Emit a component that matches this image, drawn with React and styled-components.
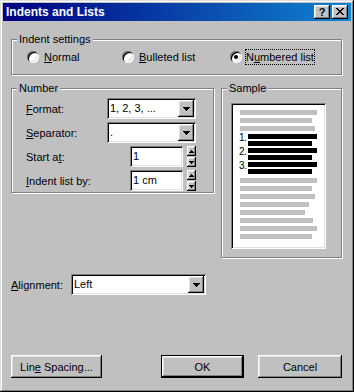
import React from 'react';
import styled, { createGlobalStyle, css } from 'styled-components';

const Global = createGlobalStyle`
  html, body { margin: 0; padding: 0; background: #c0c0c0; }
  body { font-family: "Liberation Sans", Arial, sans-serif; font-size: 11px; color: #000; }
  * { box-sizing: border-box; }
`;

const raised = css`
  box-shadow: inset -1px -1px 0 #000, inset 1px 1px 0 #fff, inset -2px -2px 0 #808080, inset 2px 2px 0 #dfdfdf;
`;
const sunken = css`
  box-shadow: inset 1px 1px 0 #808080, inset -1px -1px 0 #fff, inset 2px 2px 0 #000, inset -2px -2px 0 #dfdfdf;
`;

const Window = styled.div`
  width: 354px;
  height: 392px;
  background: #c0c0c0;
  padding: 3px;
  box-shadow: inset -1px -1px 0 #000, inset 1px 1px 0 #dfdfdf, inset -2px -2px 0 #808080, inset 2px 2px 0 #fff;
  display: flex;
  flex-direction: column;
`;

const TitleBar = styled.div`
  height: 18px;
  background: linear-gradient(to right, #000080, #1084d0);
  display: flex;
  align-items: center;
  padding: 0 3px 0 3px;
  color: #fff;
  font-weight: bold;
  font-size: 12px;
`;
const Title = styled.span`
  flex: 1;
  line-height: 18px;
`;
const CaptionButton = styled.div`
  width: 16px;
  height: 14px;
  background: #c0c0c0;
  ${raised};
  color: #000;
  font: bold 11px "Liberation Sans", Arial, sans-serif;
  display: flex;
  align-items: center;
  justify-content: center;
  margin-left: ${(p) => p.$gap || 0}px;
  padding-bottom: 1px;
`;

const Body = styled.div`
  flex: 1;
  display: flex;
  flex-direction: column;
  padding: 18px 9px 11px 8px;
`;

const Group = styled.div`
  position: relative;
  border: 1px solid #808080;
  box-shadow: 1px 1px 0 #fff, inset 1px 1px 0 #fff;
  width: ${(p) => p.$w}px;
  height: ${(p) => p.$h}px;
  flex: none;
`;
const GroupLabel = styled.span`
  position: absolute;
  top: -7px;
  left: 5px;
  padding: 0 2px;
  background: #c0c0c0;
  line-height: 13px;
  white-space: nowrap;
`;

const RadioRow = styled.div`
  display: flex;
  align-items: center;
  height: 100%;
  padding-left: 15px;
`;
const RadioOption = styled.div`
  display: flex;
  align-items: center;
  width: ${(p) => (p.$w ? `${p.$w}px` : 'auto')};
`;
const RadioCircle = styled.span`
  width: 12px;
  height: 12px;
  border-radius: 50%;
  background: #fff;
  box-shadow: inset 1px 1px 0 #808080, inset -1px -1px 0 #fff, inset 2px 2px 0 #000, inset -2px -2px 0 #dfdfdf;
  display: flex;
  align-items: center;
  justify-content: center;
  flex: none;
  &::after {
    content: '';
    display: ${(p) => (p.$checked ? 'block' : 'none')};
    width: 4px;
    height: 4px;
    border-radius: 50%;
    background: #000;
  }
`;
const RadioText = styled.span`
  margin-left: ${(p) => (p.$focus ? 3 : 4)}px;
  line-height: 14px;
  border: ${(p) => (p.$focus ? '1px dotted #000' : '1px solid transparent')};
  white-space: nowrap;
`;

const U = styled.span`
  text-decoration: underline;
`;

const MidRow = styled.div`
  display: flex;
  gap: 7px;
  margin-top: 13px;
`;

const FormGrid = styled.div`
  display: grid;
  grid-template-columns: 81px 89px;
  grid-auto-rows: 21px;
  row-gap: 3px;
  padding: 9px 0 0 14px;
  align-items: center;
`;
const Label = styled.span`
  white-space: nowrap;
`;

const Combo = styled.div`
  width: ${(p) => p.$w}px;
  height: 21px;
  background: #fff;
  ${sunken};
  display: flex;
  align-items: stretch;
  padding: 2px;
`;
const ComboText = styled.span`
  flex: 1;
  padding-left: 1px;
  line-height: 17px;
  white-space: nowrap;
  overflow: hidden;
`;
const DropButton = styled.span`
  width: 16px;
  background: #c0c0c0;
  ${raised};
  display: flex;
  align-items: center;
  justify-content: center;
`;

const SpinGroup = styled.div`
  justify-self: end;
  display: flex;
  gap: 4px;
  height: 21px;
`;
const Field = styled.div`
  width: 53px;
  height: 21px;
  background: #fff;
  ${sunken};
  padding: 2px 3px;
  line-height: 17px;
  white-space: nowrap;
`;
const Spinner = styled.div`
  width: 9px;
  display: flex;
  flex-direction: column;
  gap: 1px;
`;
const SpinButton = styled.span`
  flex: 1;
  background: #c0c0c0;
  ${raised};
  display: flex;
  align-items: center;
  justify-content: center;
`;

const SampleInner = styled.div`
  padding: 14px 0 0 9px;
`;
const Page = styled.div`
  width: 95px;
  height: 146px;
  background: #fff;
  ${sunken};
  padding: 7px 0 0 9px;
  display: flex;
  flex-direction: column;
  gap: 3px;
`;
const Bar = styled.div`
  height: 5px;
  width: ${(p) => p.$w}px;
  background: ${(p) => (p.$dark ? '#000' : '#c0c0c0')};
`;
const NumberedBlock = styled.div`
  display: flex;
  flex-direction: column;
  gap: 2px;
  margin: 0 0 1px 0;
`;
const Item = styled.div`
  display: grid;
  grid-template-columns: 9px auto;
  grid-template-rows: 5px 5px;
  row-gap: 2px;
`;
const ItemNum = styled.span`
  grid-row: 1 / span 2;
  grid-column: 1;
  font-size: 10px;
  line-height: 10px;
  margin: -1px 0 0 -1px;
  letter-spacing: -0.5px;
  white-space: nowrap;
`;
const DarkBar = styled(Bar)`
  grid-column: 2;
  margin-left: -1px;
`;

const AlignRow = styled.div`
  display: flex;
  align-items: center;
  margin-top: 16px;
`;
const AlignLabel = styled.span`
  width: 60px;
`;

const ButtonRow = styled.div`
  margin-top: auto;
  display: flex;
  align-items: center;
`;
const Button = styled.div`
  width: ${(p) => p.$w}px;
  height: 23px;
  background: #c0c0c0;
  display: flex;
  align-items: center;
  justify-content: center;
  margin-left: ${(p) => p.$ml || 0}px;
  ${(p) =>
    p.$default
      ? css`
          border: 1px solid #000;
          box-shadow: inset -1px -1px 0 #000, inset 1px 1px 0 #fff, inset -2px -2px 0 #808080, inset 2px 2px 0 #dfdfdf;
        `
      : raised}
`;
const ButtonText = styled.span`
  white-space: nowrap;
`;

const DownArrow = () => (
  <svg width="7" height="4" viewBox="0 0 7 4" shapeRendering="crispEdges">
    <path d="M0 0h7v1H0z M1 1h5v1H1z M2 2h3v1H2z M3 3h1v1H3z" fill="#000" />
  </svg>
);
const SmallArrow = ({ up }) => (
  <svg width="5" height="3" viewBox="0 0 5 3" shapeRendering="crispEdges">
    {up ? (
      <path d="M2 0h1v1H2z M1 1h3v1H1z M0 2h5v1H0z" fill="#000" />
    ) : (
      <path d="M0 0h5v1H0z M1 1h3v1H1z M2 2h1v1H2z" fill="#000" />
    )}
  </svg>
);
const CloseGlyph = () => (
  <svg width="8" height="7" viewBox="0 0 8 7" shapeRendering="crispEdges">
    <path
      d="M0 0h2v1H0z M6 0h2v1H6z M1 1h2v1H1z M5 1h2v1H5z M2 2h4v1H2z M3 3h2v1H3z M2 4h4v1H2z M1 5h2v1H1z M5 5h2v1H5z M0 6h2v1H0z M6 6h2v1H6z"
      fill="#000"
    />
  </svg>
);

const ComboBox = ({ w, value }) => (
  <Combo $w={w}>
    <ComboText>{value}</ComboText>
    <DropButton>
      <DownArrow />
    </DropButton>
  </Combo>
);

const Spin = ({ value }) => (
  <SpinGroup>
    <Field>{value}</Field>
    <Spinner>
      <SpinButton>
        <SmallArrow up />
      </SpinButton>
      <SpinButton>
        <SmallArrow />
      </SpinButton>
    </Spinner>
  </SpinGroup>
);

const topBars = [77, 72, 75];
const bottomBars = [77, 72, 75, 69, 65, 73, 77, 72];

export default function App() {
  return (
    <>
      <Global />
      <Window>
        <TitleBar>
          <Title>Indents and Lists</Title>
          <CaptionButton>?</CaptionButton>
          <CaptionButton $gap={2}>
            <CloseGlyph />
          </CaptionButton>
        </TitleBar>
        <Body>
          <Group $w={331} $h={36}>
            <GroupLabel>Indent settings</GroupLabel>
            <RadioRow>
              <RadioOption $w={95}>
                <RadioCircle />
                <RadioText>
                  <U>N</U>ormal
                </RadioText>
              </RadioOption>
              <RadioOption $w={108}>
                <RadioCircle />
                <RadioText>
                  <U>B</U>ulleted list
                </RadioText>
              </RadioOption>
              <RadioOption>
                <RadioCircle $checked />
                <RadioText $focus>
                  N<U>u</U>mbered list
                </RadioText>
              </RadioOption>
            </RadioRow>
          </Group>

          <MidRow>
            <Group $w={203} $h={105}>
              <GroupLabel>Number</GroupLabel>
              <FormGrid>
                <Label>
                  <U>F</U>ormat:
                </Label>
                <ComboBox w={89} value="1, 2, 3, ..." />
                <Label>
                  <U>S</U>eparator:
                </Label>
                <ComboBox w={89} value="." />
                <Label>
                  Start a<U>t</U>:
                </Label>
                <Spin value="1" />
                <Label>
                  <U>I</U>ndent list by:
                </Label>
                <Spin value="1 cm" />
              </FormGrid>
            </Group>
            <Group $w={121} $h={170}>
              <GroupLabel>Sample</GroupLabel>
              <SampleInner>
                <Page>
                  {topBars.map((w, i) => (
                    <Bar key={'t' + i} $w={w} />
                  ))}
                  <NumberedBlock>
                    {['1.', '2.', '3.'].map((n) => (
                      <Item key={n}>
                        <ItemNum>{n}</ItemNum>
                        <DarkBar $dark $w={69} />
                        <DarkBar $dark $w={64} />
                      </Item>
                    ))}
                  </NumberedBlock>
                  {bottomBars.map((w, i) => (
                    <Bar key={'b' + i} $w={w} />
                  ))}
                </Page>
              </SampleInner>
            </Group>
          </MidRow>

          <AlignRow>
            <AlignLabel>
              <U>A</U>lignment:
            </AlignLabel>
            <ComboBox w={135} value="Left" />
          </AlignRow>

          <ButtonRow>
            <Button $w={91}>
              <ButtonText>
                Lin<U>e</U> Spacing...
              </ButtonText>
            </Button>
            <Button $w={83} $ml={59} $default>
              <ButtonText>OK</ButtonText>
            </Button>
            <Button $w={84} $ml={14}>
              <ButtonText>Cancel</ButtonText>
            </Button>
          </ButtonRow>
        </Body>
      </Window>
    </>
  );
}
